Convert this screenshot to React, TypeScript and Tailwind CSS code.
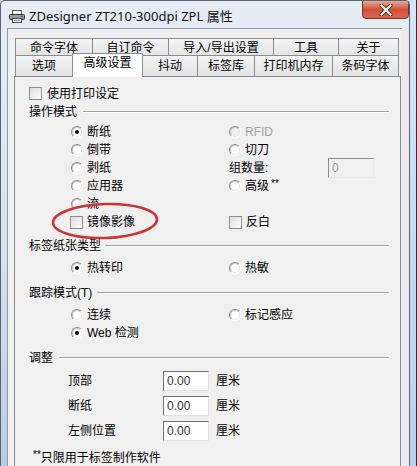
import React from "react";

const Radio = ({ checked = false, disabled = false }: { checked?: boolean; disabled?: boolean }) => (
  <span
    className={`relative inline-block shrink-0 w-[12px] h-[12px] rounded-full border border-t-[#8a8a8a] border-l-[#8a8a8a] border-b-[#ffffff] border-r-[#ffffff] ${
      disabled ? "bg-[#f0f0f0]" : "bg-white"
    }`}
  >
    <span className="absolute inset-0 rounded-full border border-t-[#bdbdbd] border-l-[#bdbdbd] border-b-[#e6e6e6] border-r-[#e6e6e6]" />
    {checked && <span className="absolute left-[3px] top-[3px] w-[4px] h-[4px] rounded-full bg-[#111]" />}
  </span>
);

const Check = () => (
  <span className="inline-block shrink-0 w-[13px] h-[13px] border border-[#8e8f8f] bg-gradient-to-br from-[#dcdcdc] to-[#ffffff]" />
);

const Group = ({ label, gap = 6 }: { label: string; gap?: number }) => (
  <div className="h-[18px] flex items-center">
    <span className="whitespace-nowrap">{label}</span>
    <span
      className={`flex-1 h-[2px] border-t border-t-[#a0a0a0] border-b border-b-white ${
        gap === 4 ? "ml-[4px]" : gap === 5 ? "ml-[5px]" : "ml-[6px]"
      }`}
    />
  </div>
);

const RadioRow = ({ text, checked, disabled }: { text: React.ReactNode; checked?: boolean; disabled?: boolean }) => (
  <div className="h-[18px] flex items-center gap-[4px]">
    <Radio checked={checked} disabled={disabled} />
    <span className={disabled ? "text-[#a3a3a3]" : ""}>{text}</span>
  </div>
);

const Tab = ({ w, label, first }: { w: string; label: string; first?: boolean }) => (
  <div
    className={`${w} h-full flex items-center justify-center border border-b-0 border-[#898c95] bg-gradient-to-b from-[#f4f4f4] to-[#e3e3e3] ${
      first ? "" : "-ml-px"
    }`}
  >
    {label}
  </div>
);

const NumInput = ({ v }: { v: string }) => (
  <div className="w-[46px] h-[20px] bg-white border border-t-[#6f6f6f] border-l-[#6f6f6f] border-b-[#e3e3e3] border-r-[#e3e3e3] flex items-center pl-[3px] text-[#333]">
    {v}
  </div>
);

export default function App() {
  return (
    <div className="w-[417px] h-[466px] overflow-hidden flex bg-[#c6dbef] text-[12px] leading-[14px] text-black font-['Liberation_Sans','Noto_Sans_CJK_SC',sans-serif]">
      {/* window */}
      <div className="w-[410px] h-full flex flex-col border-l border-r border-t border-[#55657a] rounded-tl-[5px] rounded-tr-[5px] bg-gradient-to-b from-[#e6edf5] via-[#d9e4ef] to-[#b7cde4] overflow-hidden">
        {/* title bar */}
        <div className="h-[27px] flex items-start shrink-0">
          <div className="pt-[9px] pl-[8px]">
            <svg width="16" height="13" viewBox="0 0 16 13">
              <rect x="3.5" y="0.5" width="9" height="4" fill="#fff" stroke="#555" />
              <rect x="0.5" y="4.5" width="15" height="5" rx="1" fill="#9a9a9a" stroke="#333" />
              <rect x="3.5" y="8.5" width="9" height="4" fill="#fff" stroke="#444" />
              <line x1="5" y1="10.5" x2="11" y2="10.5" stroke="#888" />
              <rect x="12" y="6" width="2" height="1" fill="#2a7a2a" />
            </svg>
          </div>
          <div className="ml-[4px] pt-[7px] text-[13px] leading-[16px] text-[#111] font-['Noto_Sans','Noto_Sans_CJK_SC',sans-serif]">
            ZDesigner ZT210-300dpi ZPL 属性
          </div>
          <div className="flex-1" />
          <div className="w-[47px] h-[19px] -mt-px rounded-b-[4px] border border-[#7a2e24] bg-gradient-to-b from-[#e8a898] via-[#cf4f38] to-[#d86a4e] flex items-center justify-center">
            <svg width="14" height="12" viewBox="0 0 14 12">
              <path d="M2.5 1.5 L11.5 10.5 M11.5 1.5 L2.5 10.5" stroke="#6b2a20" strokeWidth="4" strokeLinecap="round" />
              <path d="M2.5 1.5 L11.5 10.5 M11.5 1.5 L2.5 10.5" stroke="#ffffff" strokeWidth="2.2" strokeLinecap="round" />
            </svg>
          </div>
        </div>

        {/* body */}
        <div className="flex-1 flex min-h-0">
          <div className="w-[6px] shrink-0" />
          {/* panel */}
          <div className="w-[395px] shrink-0 bg-[#f0f0f0] border-l border-t border-[#8c99aa] pt-[9px]">
            {/* tabs row 1 */}
            <div className="ml-[7px] h-[18px] flex">
              <Tab w="w-[78px]" label="命令字体" first />
              <Tab w="w-[77px]" label="自订命令" />
              <Tab w="w-[106px]" label="导入/导出设置" />
              <Tab w="w-[66px]" label="工具" />
              <Tab w="w-[61px]" label="关于" />
            </div>
            {/* tabs row 2 */}
            <div className="ml-[7px] -mt-px h-[21px] flex items-end relative z-10">
              <Tab w="w-[58px]" label="选项" first />
              <div className="-ml-px w-[71px] h-[24px] -mb-px flex items-center justify-center pb-[5px] border border-b-0 border-[#898c95] bg-white">
                高级设置
              </div>
              <Tab w="w-[56px]" label="抖动" />
              <Tab w="w-[58px]" label="标签库" />
              <Tab w="w-[79px]" label="打印机内存" />
              <Tab w="w-[67px]" label="条码字体" />
            </div>

            {/* content */}
            <div className="ml-[6px] w-[387px] h-[420px] border border-[#898c95] bg-[#f0f0f0] pt-[7px] pl-[14px] pr-[11px]">
              <div className="h-[19px] flex items-center gap-[5px]">
                <Check />
                <span>使用打印设定</span>
              </div>
              <Group label="操作模式" gap={6} />
              <div className="mt-[2px] ml-[42px] grid grid-cols-[158px_1fr]">
                <RadioRow text="断纸" checked />
                <RadioRow text="RFID" disabled />
                <RadioRow text="倒带" />
                <RadioRow text="切刀" />
                <RadioRow text="剥纸" />
                <div className="h-[18px] flex items-center">
                  <span className="w-[99px]">组数量:</span>
                  <div className="w-[46px] h-[20px] bg-[#f0f0f0] border border-t-[#8a8a8a] border-l-[#8a8a8a] border-b-[#e8e8e8] border-r-[#e8e8e8] flex items-center pl-[3px] text-[#9a9a9a]">
                    0
                  </div>
                </div>
                <RadioRow text="应用器" />
                <RadioRow
                  text={
                    <span>
                      高级<span className="relative -top-[3px] ml-[2px] text-[10px]">**</span>
                    </span>
                  }
                />
                <RadioRow text="流" />
                <div className="h-[18px]" />
                <div className="h-[18px] flex items-center gap-[4px] -ml-px">
                  <Check />
                  <span>镜像影像</span>
                </div>
                <div className="h-[18px] flex items-center gap-[4px]">
                  <Check />
                  <span>反白</span>
                </div>
              </div>

              <div className="mt-[6px]">
                <Group label="标签纸张类型" gap={4} />
              </div>
              <div className="mt-[4px] ml-[42px] grid grid-cols-[158px_1fr]">
                <RadioRow text="热转印" checked />
                <RadioRow text="热敏" />
              </div>

              <div className="mt-[7px]">
                <Group label="跟踪模式(T)" gap={5} />
              </div>
              <div className="mt-[4px] ml-[42px] grid grid-cols-[158px_1fr]">
                <RadioRow text="连续" />
                <RadioRow text="标记感应" />
                <RadioRow text="Web 检测" checked />
              </div>

              <div className="mt-[7px]">
                <Group label="调整" gap={6} />
              </div>
              <div className="mt-[4px] ml-[39px] flex flex-col gap-[5px]">
                {[
                  ["顶部", "0.00"],
                  ["断纸", "0.00"],
                  ["左侧位置", "0.00"],
                ].map(([l, v]) => (
                  <div key={l} className="h-[20px] flex items-center">
                    <span className="w-[95px]">{l}</span>
                    <NumInput v={v} />
                    <span className="ml-[7px]">厘米</span>
                  </div>
                ))}
              </div>
              <div className="mt-[8px] ml-[4px] h-[18px] flex items-center">
                <span className="relative -top-[3px] text-[10px]">**</span>
                <span>只限用于标签制作软件</span>
              </div>
            </div>
          </div>
          <div className="w-[7px] shrink-0 bg-[#eee8ee]" />
        </div>
      </div>
      {/* outside strip */}
      <div className="w-[7px] h-full border-r border-[#22334a] bg-gradient-to-b from-[#d6e6f5] to-[#b8d2ec]" />

      {/* red annotation oval */}
      <svg className="absolute left-[50px] top-[201px]" width="112" height="42" viewBox="0 0 112 42">
        <ellipse cx="55" cy="20" rx="52" ry="17" fill="none" stroke="#cc3333" strokeWidth="2.5" transform="rotate(-2 55 20)" />
      </svg>
    </div>
  );
}
